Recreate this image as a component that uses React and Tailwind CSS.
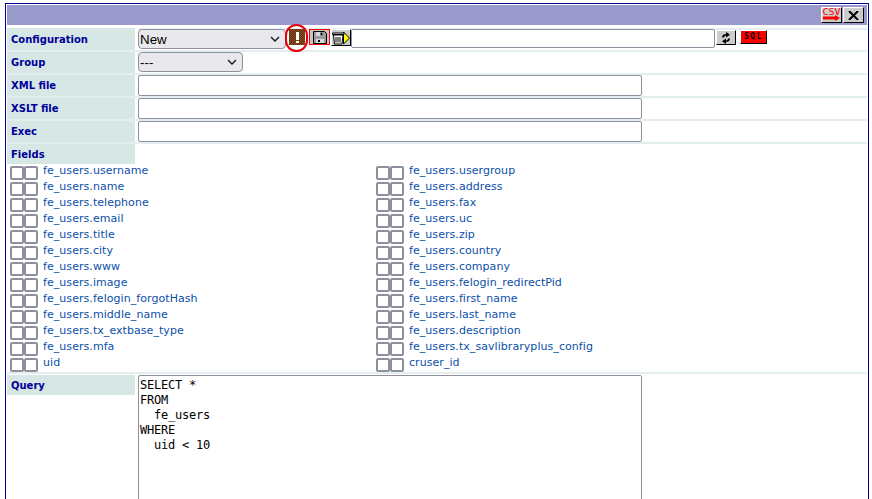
import React from 'react';

const FIELDS = [
  ['fe_users.username', 'fe_users.usergroup'],
  ['fe_users.name', 'fe_users.address'],
  ['fe_users.telephone', 'fe_users.fax'],
  ['fe_users.email', 'fe_users.uc'],
  ['fe_users.title', 'fe_users.zip'],
  ['fe_users.city', 'fe_users.country'],
  ['fe_users.www', 'fe_users.company'],
  ['fe_users.image', 'fe_users.felogin_redirectPid'],
  ['fe_users.felogin_forgotHash', 'fe_users.first_name'],
  ['fe_users.middle_name', 'fe_users.last_name'],
  ['fe_users.tx_extbase_type', 'fe_users.description'],
  ['fe_users.mfa', 'fe_users.tx_savlibraryplus_config'],
  ['uid', 'cruser_id'],
];

const Chevron = () => (
  <svg width="10" height="6" viewBox="0 0 10 6" fill="none" stroke="#222" strokeWidth="1.5">
    <path d="M1 1l4 4 4-4" />
  </svg>
);

const Select = ({ value, className }) => (
  <div className={`h-[20px] flex items-center justify-between pl-px pr-[5px] bg-[#e9e9ed] border border-[#8f8f9d] rounded-[4px] text-black font-['Liberation_Sans',sans-serif] text-[13.33px] ${className}`}>
    <span className="mt-[2px]">{value}</span>
    <Chevron />
  </div>
);

const Label = ({ children, className }) => (
  <div className={`w-[128px] shrink-0 bg-[#d6e7e6] pl-1 font-bold text-[#000099] ${className}`}>{children}</div>
);

const Row = ({ label, children }) => (
  <div className="h-[23px] flex border-b-2 border-[#e2efee]">
    <Label className="h-[21px] pt-[3px]">{label}</Label>
    <div className="ml-[3px] flex-1 flex items-start">{children}</div>
  </div>
);

const TextBox = () => (
  <div className="w-[504px] h-[21px] bg-white border border-[#8f8f9d] rounded-[2px]" />
);

const Check = () => <div className="w-[14px] h-[14px] border-2 border-[#8f8f9d] rounded-[2px] bg-white" />;

const Field = ({ name }) => (
  <div className="w-[366px] h-[16px] flex">
    <div className="flex mt-[2px] mr-[5px]">
      <Check />
      <Check />
    </div>
    <span className="text-[#0b50a8] text-[11px] tracking-[0.06px] leading-[14px]">{name}</span>
  </div>
);

const Raised = ({ className, children }) => (
  <div className={`flex items-center justify-center border border-t-white border-l-white border-r-black border-b-black ${className}`}>
    {children}
  </div>
);

const App = () => {
  return (
    <div className="w-[872px] h-[499px] overflow-hidden bg-white pt-[3px] pl-[5px] text-[10px] font-['DejaVu_Sans',sans-serif]">
      <div className="w-[864px] h-[496px] border-t border-x border-[#000099] pt-px px-px">
        {/* Title bar */}
        <div className="h-[20px] bg-[#9999cc] flex justify-end items-start pr-[3px] pt-[2px] gap-px">
          <Raised className="w-[21px] h-[16px] bg-[#cccccc]">
            <svg width="19" height="14" viewBox="0 0 19 14">
              <text x="0.500" y="6.500" fontSize="8.500" textLength="18" lengthAdjust="spacingAndGlyphs" fontFamily="DejaVu Sans Mono, monospace" fill="#ff0000">CSV</text>
              <path d="M1 8.500h12V7l5 3-5 3v-1.500H1z" fill="#ff0000" />
            </svg>
          </Raised>
          <Raised className="w-[21px] h-[16px] bg-[#cccccc]">
            <svg width="11" height="9" viewBox="0 0 11 9" stroke="#000" strokeWidth="2">
              <path d="M1 0l9 9M10 0l-9 9" />
            </svg>
          </Raised>
        </div>

        {/* Configuration row */}
        <div className="mt-[3px] h-[24px] flex border-b-2 border-[#e2efee]">
          <Label className="h-[22px] pt-[4px]">Configuration</Label>
          <div className="ml-[3px] flex-1 flex items-start pt-px bg-[linear-gradient(#e2efee,#e2efee)] bg-no-repeat bg-[length:100%_2px]">
            <Select value="New" className="w-[148px]" />
            <div className="relative w-[16px] h-[16px] ml-[3px] bg-[repeating-conic-gradient(#5f2c0c_0_25%,#8f5020_0_50%)] bg-[length:2px_2px] flex flex-col items-center justify-center gap-px">
              <div className="w-[3px] h-[8px] bg-white" />
              <div className="w-[3px] h-[2px] bg-white" />
              <div className="absolute w-[23px] h-[28px] -left-[4px] -top-[5px] rounded-full border-2 border-[#e6000e]" />
            </div>
            <div className="ml-[4px] w-[21px] h-[16px] border border-[#ff0000] bg-[#c4c4c4] flex items-center justify-center">
              <svg width="14" height="13" viewBox="0 0 14 13">
                <path d="M0.500 0.500h11l2 2v10h-13z" fill="#9a9a9a" stroke="#000" />
                <path d="M3 1h7v4H3z" fill="#d8d8d8" />
                <path d="M7.500 1.500h2v3h-2z" fill="#000" />
                <path d="M3 8h8v4H3z" fill="#d8d8d8" />
                <path d="M5 9h2v2H5z" fill="#000" />
              </svg>
            </div>
            <Raised className="ml-px w-[20px] h-[17px] bg-[#cccccc]">
              <svg width="18" height="14" viewBox="0 0 18 14">
                <path d="M11.500 1l6 6-6 6z" fill="#ffff00" stroke="#000" />
                <path d="M0.500 2h11.500v1.500H0.500z" fill="#fff" stroke="#000" />
                <path d="M1.500 4h9.500l-1 9H2.500z" fill="#fff" stroke="#000" />
                <path d="M4 6v5.500M6 6v5.500M8 6v5.500" stroke="#000" />
              </svg>
            </Raised>
            <div className="w-[364px] h-[19px] bg-white border border-[#8f8f9d] rounded-[2px]" />
            <Raised className="ml-px mt-px w-[20px] h-[15px] bg-[#cccccc]">
              <svg width="10" height="12" viewBox="0 0 10 12" fill="#000">
                <path d="M1 5.500c0-2.500 2-3.500 4-3.500V0l4 2.800-4 2.700V3.500C4 3.500 3 4.500 3 5.500z" />
                <path d="M9 6.500C9 9 7 10 5 10v2L1 9.200l4-2.700v2c1 0 2-1 2-2z" />
              </svg>
            </Raised>
            <Raised className="ml-[4px] mt-px w-[27px] h-[14px] bg-[#ff0000]">
              <span className="font-['DejaVu_Sans_Mono',monospace] font-bold text-[8px] leading-[8px] tracking-[1.5px] text-black">SQL</span>
            </Raised>
          </div>
        </div>

        <Row label="Group">
          <Select value="---" className="w-[105px]" />
        </Row>
        <Row label="XML file"><TextBox /></Row>
        <Row label="XSLT file"><TextBox /></Row>
        <Row label="Exec"><TextBox /></Row>

        <Label className="h-[20px] pt-[3px]">Fields</Label>
        <div className="pl-[3px] h-[210px] border-b-2 border-[#e2efee]">
          {FIELDS.map(([a, b]) => (
            <div key={a} className="flex">
              <Field name={a} />
              <Field name={b} />
            </div>
          ))}
        </div>

        <div className="flex mt-px">
          <Label className="h-[20px] pt-[3px]">Query</Label>
          <div className="ml-[3px] w-[504px] h-[130px] border border-[#8f8f9d] rounded-[2px] pl-px pt-[2px] font-['DejaVu_Sans_Mono',monospace] text-[12px] leading-[15px] tracking-[-0.22px] whitespace-pre text-black">
            {'SELECT *\nFROM\n  fe_users\nWHERE\n  uid < 10'}
          </div>
        </div>
      </div>
    </div>
  );
};

export default App;
